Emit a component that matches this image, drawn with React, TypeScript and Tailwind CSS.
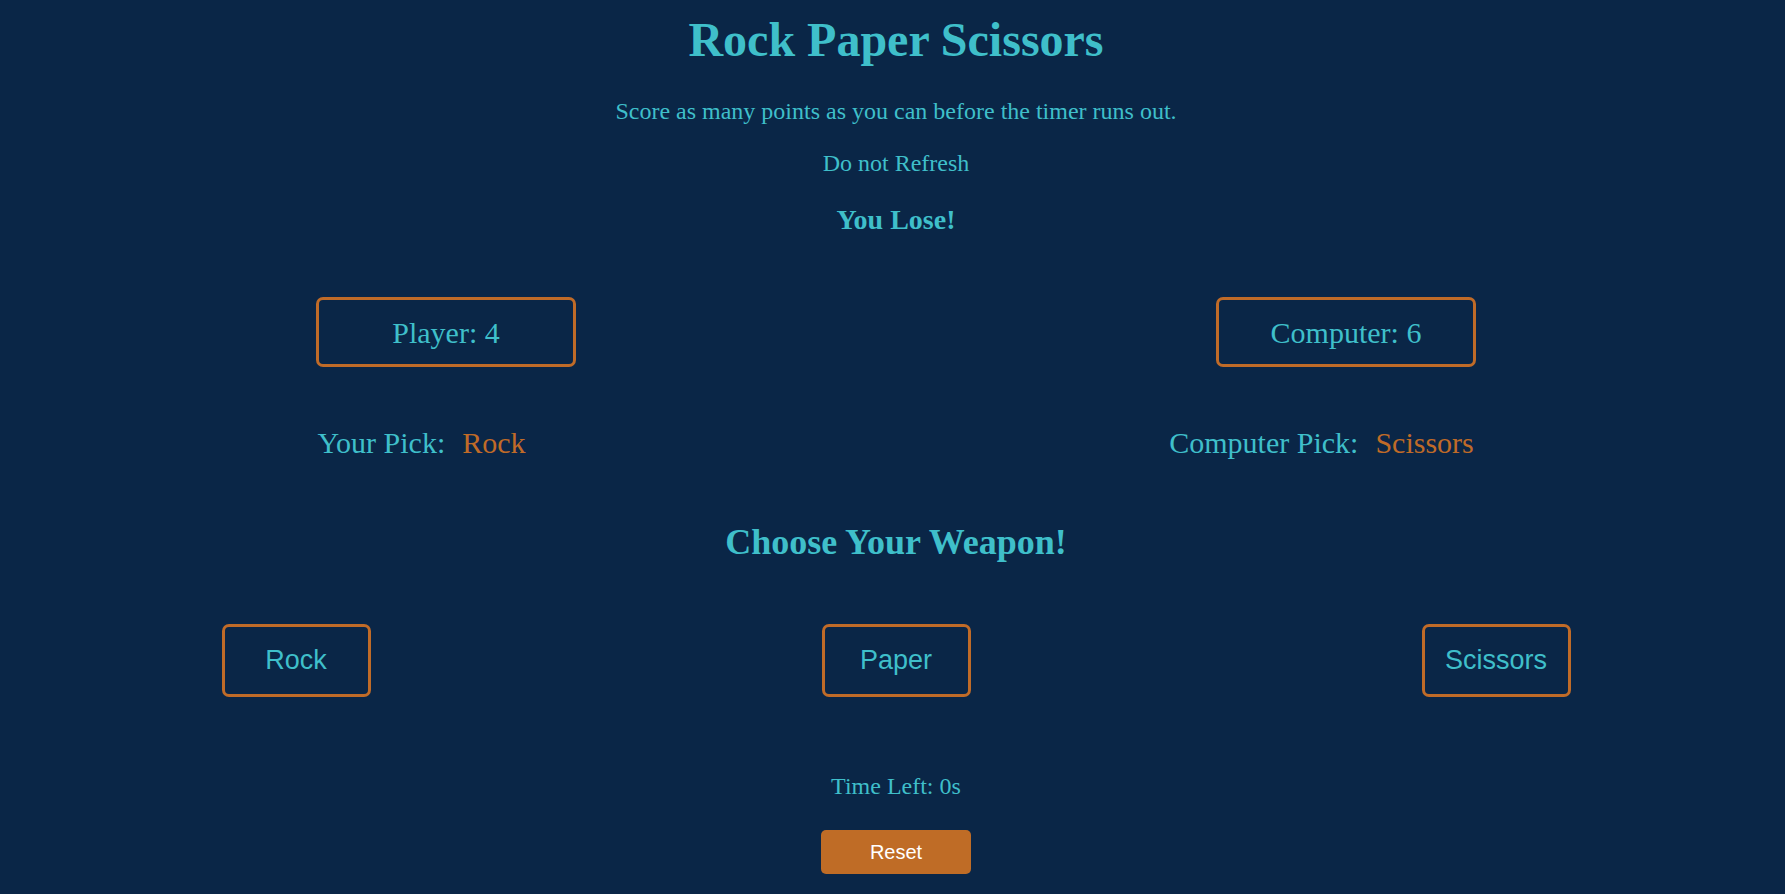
import React, { useState } from 'react';

type Weapon = 'Rock' | 'Paper' | 'Scissors';

const weapons: Weapon[] = ['Rock', 'Paper', 'Scissors'];

export default function App() {
  const [playerScore] = useState(4);
  const [computerScore] = useState(6);
  const [playerPick, setPlayerPick] = useState<Weapon>('Rock');
  const [computerPick] = useState<Weapon>('Scissors');
  const [timeLeft] = useState(0);

  return (
    <div className="min-h-screen w-full bg-[#0a2647] pl-[7px] pt-[12px] text-[#3fbfca] font-['Liberation_Serif',serif]">
      {/* Heading */}
      <h1 className="text-center text-[48px] leading-[56px] font-bold">Rock Paper Scissors</h1>
      <p className="mt-[29px] text-center text-[24px] leading-[28px]">
        Score as many points as you can before the timer runs out.
      </p>
      <p className="mt-[24px] text-center text-[24px] leading-[28px]">Do not Refresh</p>
      <p className="mt-[27px] text-center text-[28px] leading-[32px] font-bold">You Lose!</p>

      {/* Scores and picks */}
      <div className="mt-[61px] flex justify-center gap-[640px]">
        <div className="flex w-[260px] flex-col items-center">
          <div className="flex h-[70px] w-[260px] items-center justify-center rounded-[7px] border-[3px] border-[#c06b28] text-[30px]">
            Player: {playerScore}
          </div>
          <div className="mt-[59px] flex whitespace-nowrap pr-[49px] text-[30px] leading-[34px]">
            <span>Your Pick:</span>
            <span className="ml-[17px] text-[#c06b28]">{playerPick}</span>
          </div>
        </div>
        <div className="flex w-[260px] flex-col items-center">
          <div className="flex h-[70px] w-[260px] items-center justify-center rounded-[7px] border-[3px] border-[#c06b28] text-[30px]">
            Computer: {computerScore}
          </div>
          <div className="mt-[59px] flex whitespace-nowrap pr-[49px] text-[30px] leading-[34px]">
            <span>Computer Pick:</span>
            <span className="ml-[17px] text-[#c06b28]">{computerPick}</span>
          </div>
        </div>
      </div>

      <h2 className="mt-[62px] text-center text-[36px] leading-[40px] font-bold">Choose Your Weapon!</h2>

      {/* Weapon buttons */}
      <div className="mt-[62px] flex justify-center gap-[451px]">
        {weapons.map((w) => (
          <button
            key={w}
            onClick={() => setPlayerPick(w)}
            className="flex h-[73px] w-[149px] items-center justify-center rounded-[7px] border-[3px] border-[#c06b28] bg-transparent font-['Liberation_Sans',Arial,sans-serif] text-[27px] text-[#3fbfca]"
          >
            {w}
          </button>
        ))}
      </div>

      <p className="mt-[75px] text-center text-[24px] leading-[28px]">Time Left: {timeLeft}s</p>

      <div className="mt-[30px] flex justify-center">
        <button className="h-[44px] w-[150px] rounded-[5px] bg-[#bf6c26] font-['Liberation_Sans',Arial,sans-serif] text-[20px] text-white">
          Reset
        </button>
      </div>
    </div>
  );
}
